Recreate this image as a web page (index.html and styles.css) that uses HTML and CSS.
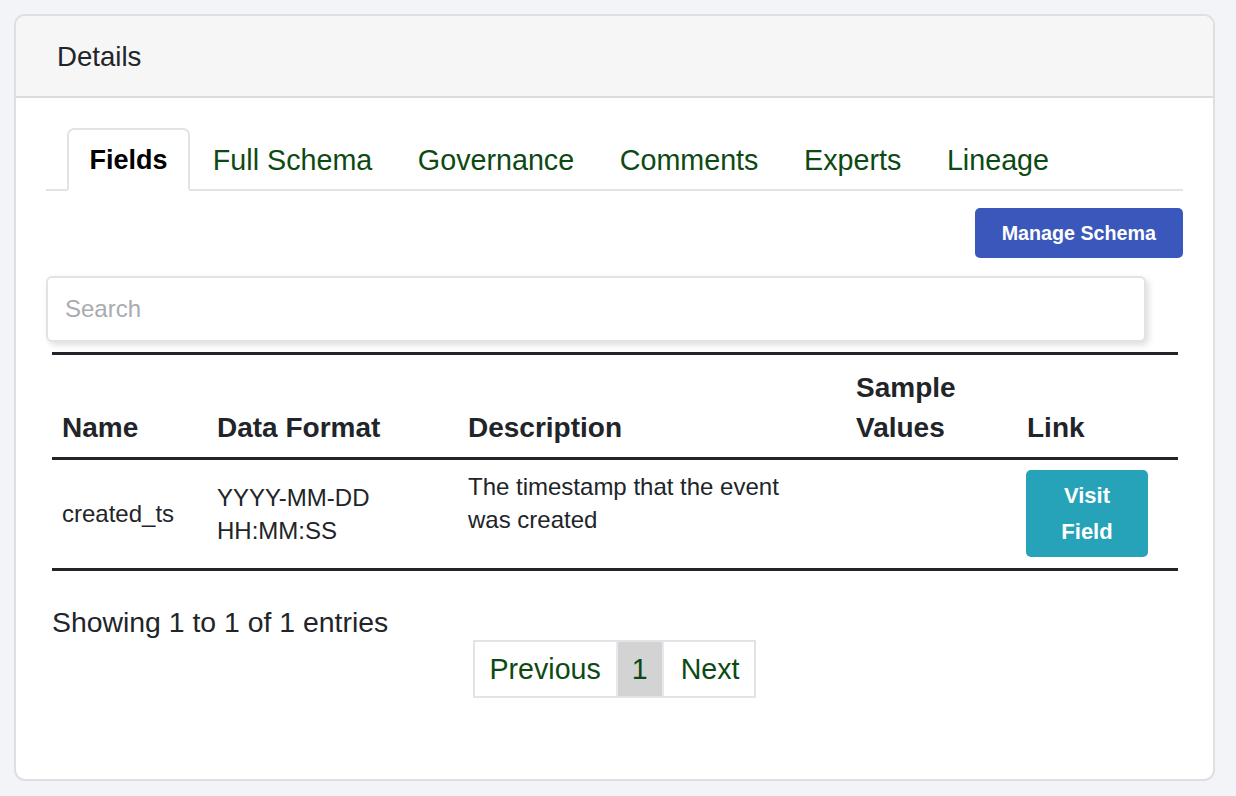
FILE: index.html
```html
<!DOCTYPE html>
<html lang="en">
<head>
<meta charset="utf-8">
<title>Details</title>
<link rel="stylesheet" href="styles.css">
</head>
<body>
<div class="card">
  <div class="card-header">Details</div>
  <div class="card-body">
    <ul class="tabs">
      <li class="tab active">Fields</li>
      <li class="tab">Full Schema</li>
      <li class="tab">Governance</li>
      <li class="tab">Comments</li>
      <li class="tab">Experts</li>
      <li class="tab">Lineage</li>
    </ul>
    <div class="actions">
      <button class="btn btn-primary">Manage Schema</button>
    </div>
    <input class="search" type="text" placeholder="Search">
    <table class="fields">
      <colgroup>
        <col class="c-name">
        <col class="c-format">
        <col class="c-desc">
        <col class="c-sample">
        <col class="c-link">
      </colgroup>
      <thead>
        <tr>
          <th>Name</th>
          <th>Data Format</th>
          <th>Description</th>
          <th>Sample Values</th>
          <th>Link</th>
        </tr>
      </thead>
      <tbody>
        <tr>
          <td>created_ts</td>
          <td>YYYY-MM-DD HH:MM:SS</td>
          <td class="desc">The timestamp that the event was created</td>
          <td></td>
          <td><button class="btn btn-info">Visit Field</button></td>
        </tr>
      </tbody>
    </table>
    <div class="info">Showing 1 to 1 of 1 entries</div>
    <div class="pager-wrap">
      <div class="pager">
        <span class="page">Previous</span>
        <span class="page current">1</span>
        <span class="page">Next</span>
      </div>
    </div>
  </div>
</div>
</body>
</html>
```

FILE: styles.css
```css
* { box-sizing: border-box; }
html, body {
  margin: 0;
  padding: 0;
  background: #f3f4f8;
  font-family: "Liberation Sans", Arial, Helvetica, sans-serif;
  color: #212529;
}
body { padding: 14px; }

.card {
  width: 1201px;
  height: 767px;
  background: #ffffff;
  border: 2px solid #dfdfe1;
  border-radius: 11px;
  overflow: hidden;
}

.card-header {
  height: 82px;
  background: #f6f6f6;
  border-bottom: 2px solid #dcdcdc;
  padding: 2px 41px 0;
  display: flex;
  align-items: center;
  font-size: 27.6px;
  color: #212529;
}

.card-body {
  padding: 30px 30px;
}

.tabs {
  list-style: none;
  margin: 0;
  padding: 0 0 0 21px;
  display: flex;
  border-bottom: 2px solid #e1e3e6;
}
.tab {
  padding: 14px 21.8px 12px;
  border: 1px solid transparent;
  border-bottom: none;
  font-size: 28.7px;
  line-height: 34px;
  color: #0d4a13;
  margin-bottom: -2px;
}
.tab.active {
  color: #000;
  font-weight: bold;
  font-size: 27px;
  background: #fff;
  border: 2px solid #e1e3e6;
  border-bottom: 2px solid #fff;
  border-radius: 7px 7px 0 0;
  padding: 13px 20.5px 12px;
}

.actions {
  display: flex;
  justify-content: flex-end;
  margin-top: 17px;
}
.btn {
  font-family: inherit;
  border: none;
  color: #fff;
  font-weight: bold;
  border-radius: 5px;
  cursor: pointer;
}
.btn-primary {
  background: #3a58bb;
  font-size: 19.7px;
  line-height: 24px;
  padding: 13px 27px;
}

.search {
  display: block;
  margin-top: 18px;
  width: 1100px;
  height: 66px;
  padding: 0 17px;
  font-family: inherit;
  font-size: 24px;
  color: #212529;
  border: 2px solid #e0e3e7;
  border-radius: 6px;
  box-shadow: 3px 3px 6px rgba(0, 0, 0, 0.13);
  outline: none;
}
.search::placeholder { color: #a8acb1; }

.fields {
  margin: 10px 6px 0;
  width: 1126px;
  border-collapse: collapse;
  table-layout: fixed;
  border-top: 3px solid #212529;
}
.c-name { width: 155px; }
.c-format { width: 251px; }
.c-desc { width: 388px; }
.c-sample { width: 171px; }
.c-link { width: 161px; }

.fields th {
  text-align: left;
  vertical-align: bottom;
  font-size: 28px;
  line-height: 40px;
  font-weight: bold;
  padding: 13px 10px 9px;
  border-bottom: 3px solid #212529;
}
.fields td {
  font-size: 24px;
  line-height: 33px;
  vertical-align: middle;
  padding: 10px 10px 11px;
  border-bottom: 3px solid #212529;
}
.fields td.desc {
  vertical-align: top;
  padding-top: 10px;
  padding-right: 40px;
}

.btn-info {
  display: block;
  background: #26a3b8;
  font-size: 22px;
  line-height: 36px;
  padding: 8px 30px 7px;
  width: 122px;
  margin-left: -1px;
  white-space: normal;
}

.info {
  margin-top: 31px;
  padding-left: 6px;
  font-size: 28.4px;
  line-height: 40px;
}

.pager-wrap {
  display: flex;
  justify-content: center;
  margin-top: -2px;
}
.pager {
  display: flex;
  border: 2px solid #e0e3e7;
}
.page {
  font-size: 28.6px;
  line-height: 54px;
  color: #0d4a13;
  padding: 0 15px;
}
.page.current {
  background: #d3d3d3;
  border-left: 2px solid #e6e8eb;
  border-right: 2px solid #e6e8eb;
  padding: 0 14px;
}
.page:last-child { padding: 0 15px 0 17px; }
```
